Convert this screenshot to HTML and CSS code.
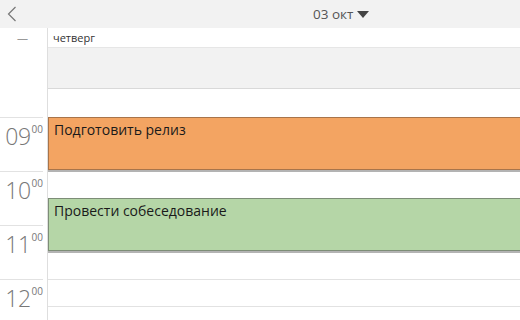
FILE: index.html
```html
<!DOCTYPE html>
<html lang="ru">
<head>
    <meta charset="UTF-8">
    <title>Календарь</title>
    <link rel="stylesheet" href="styles.css">
</head>
<body>
    <div class="topbar">
        <button class="back" aria-label="Назад">
            <svg width="10" height="16" viewBox="0 0 10 16"><path d="M8.5 1 L1.5 8 L8.5 15" fill="none" stroke="#777" stroke-width="1.2"/></svg>
        </button>
        <div class="date-title">03 окт <span class="caret"></span></div>
    </div>

    <div class="calendar">
        <div class="time-col">
            <div class="time-head">—</div>
            <div class="time-allday"></div>
            <div class="time-gap"></div>
            <div class="hour"><span class="h">09</span><sup>00</sup></div>
            <div class="hour"><span class="h">10</span><sup>00</sup></div>
            <div class="hour"><span class="h">11</span><sup>00</sup></div>
            <div class="hour"><span class="h">12</span><sup>00</sup></div>
        </div>
        <div class="day-col">
            <div class="day-name">четверг</div>
            <div class="allday"></div>
            <div class="slots">
                <div class="slot first"></div>
                <div class="slot"></div>
                <div class="slot"></div>
                <div class="slot"></div>
                <div class="slot"></div>
                <div class="slot"></div>
                <div class="slot"></div>
                <div class="slot"></div>
                <div class="slot"></div>

                <div class="event orange" style="top: 28px; height: 53px;">Подготовить релиз</div>
                <div class="event green" style="top: 109px; height: 53px;">Провести собеседование</div>
            </div>
        </div>
    </div>
</body>
</html>
```

FILE: styles.css
```css
html, body {
    margin: 0;
    padding: 0;
}
body {
    width: 520px;
    height: 320px;
    overflow: hidden;
    background: #fff;
    font-family: "Open Sans", "Noto Sans", sans-serif;
    color: #222;
}
.topbar {
    height: 28px;
    background: #f2f2f2;
    display: flex;
    align-items: center;
}
.back {
    border: none;
    background: none;
    padding: 0;
    margin-left: 7px;
    width: 10px;
    height: 16px;
    display: flex;
}
.date-title {
    margin-left: 296px;
    font-size: 13.5px;
    color: #555;
    display: flex;
    align-items: center;
    gap: 4px;
}
.caret {
    width: 0;
    height: 0;
    border-left: 6px solid transparent;
    border-right: 6px solid transparent;
    border-top: 7px solid #444;
}
.calendar {
    display: flex;
}
.time-col {
    width: 47px;
    border-right: 1px solid #dedede;
    flex: none;
}
.time-head {
    height: 20px;
    line-height: 20px;
    font-size: 11px;
    color: #999;
    padding-left: 17px;
}
.time-allday {
    height: 41px;
}
.time-gap {
    height: 28px;
}
.hour {
    height: 53px;
    margin-right: 4px;
    border-top: 1px solid #e2e2e2;
    display: flex;
    justify-content: flex-end;
    align-items: flex-start;
    color: #777;
}
.hour .h {
    font-size: 23px;
    font-weight: 300;
    line-height: 26px;
    margin-top: 5px;
    letter-spacing: -0.5px;
}
.hour sup {
    font-size: 10px;
    line-height: 12px;
    margin-top: 5px;
    margin-left: 1px;
}
.day-col {
    flex: 1;
}
.day-name {
    height: 19px;
    line-height: 20px;
    font-size: 11px;
    color: #333;
    padding-left: 5px;
    border-bottom: 1px solid #e6e6e6;
}
.allday {
    height: 40px;
    background: #f2f2f2;
    border-bottom: 1px solid #d9d9d9;
}
.slots {
    position: relative;
}
.slot {
    height: 26px;
    border-bottom: 1px solid #e2e2e2;
}
.slot.first {
    height: 28px;
}
.event {
    position: absolute;
    left: 0;
    right: 0;
    box-sizing: border-box;
    padding: 2px 5px;
    font-size: 14px;
    line-height: 20px;
    color: #1a1a1a;
    border: 1px solid;
    border-right: none;
    box-shadow: 0 2px 0 #b3b3b3;
}
.event.orange {
    background: #f3a462;
    border-color: #a8744a;
}
.event.green {
    background: #b5d6a7;
    border-color: #7d8d77;
}
```
